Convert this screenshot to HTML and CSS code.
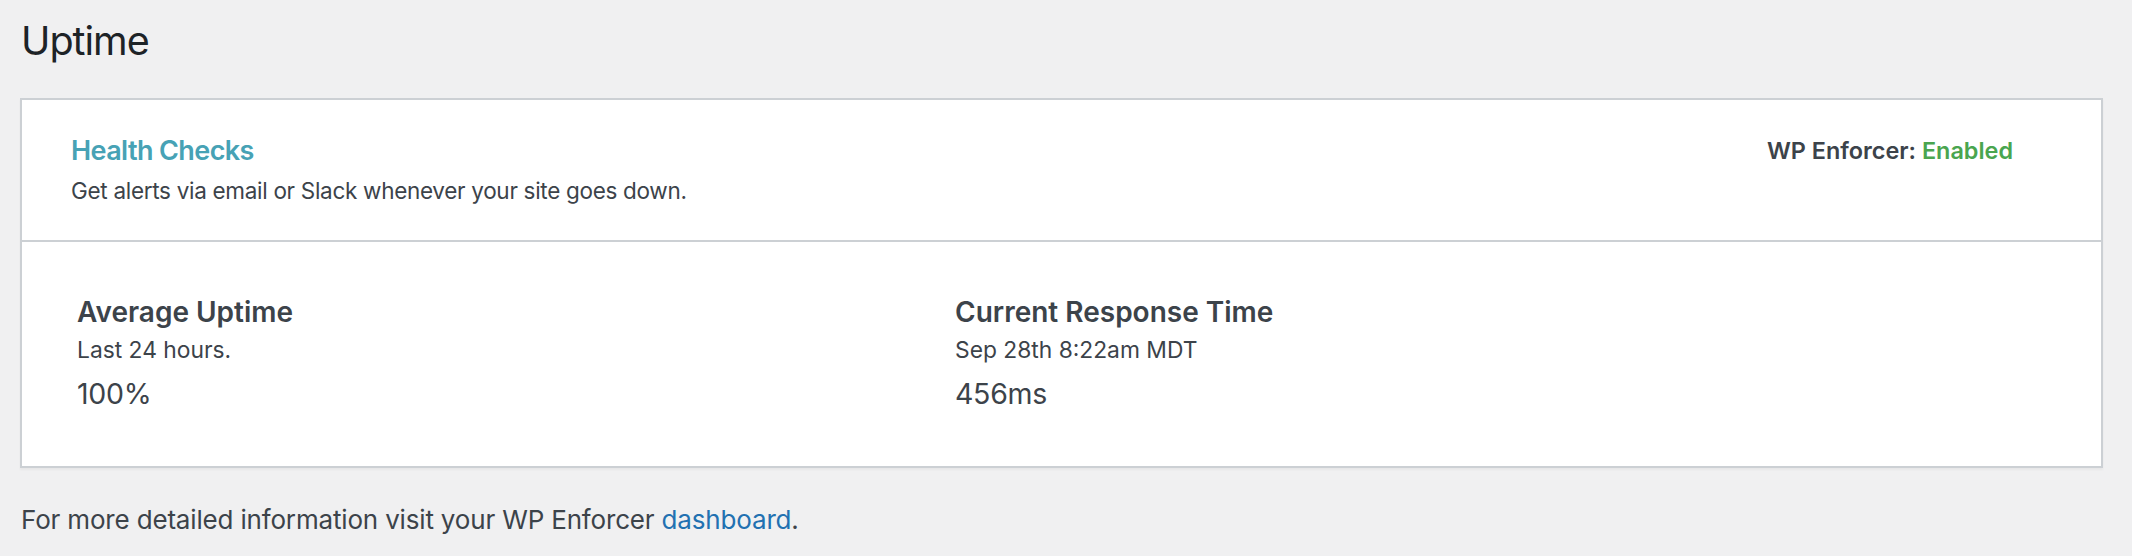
FILE: index.html
```html
<!DOCTYPE html>
<html lang="en">
<head>
<meta charset="utf-8">
<title>Uptime</title>
<link rel="stylesheet" href="styles.css">
</head>
<body>
<div class="wrap">
  <h1 class="page-title">Uptime</h1>
  <div class="card">
    <div class="card-header">
      <div class="card-intro">
        <h2 class="card-title">Health Checks</h2>
        <p class="card-desc">Get alerts via email or Slack whenever your site goes down.</p>
      </div>
      <div class="status">WP Enforcer: <span class="status-on">Enabled</span></div>
    </div>
    <div class="card-body">
      <div class="stat">
        <h3 class="stat-title">Average Uptime</h3>
        <p class="stat-sub">Last 24 hours.</p>
        <p class="stat-value">100%</p>
      </div>
      <div class="stat">
        <h3 class="stat-title">Current Response Time</h3>
        <p class="stat-sub">Sep 28th 8:22am MDT</p>
        <p class="stat-value">456ms</p>
      </div>
    </div>
  </div>
  <p class="footer-note">For more detailed information visit your WP Enforcer <a href="#" class="link">dashboard</a>.</p>
</div>
</body>
</html>
```
FILE: styles.css
```css
html, body {
  margin: 0;
  padding: 0;
  background: #f0f0f1;
}
body {
  font-family: Inter, "Noto Sans", sans-serif;
  color: #3c434a;
}
.wrap {
  padding: 0 29px 0 20px;
}
.page-title {
  margin: 0;
  padding: 15px 0 31px 1px;
  font-size: 39.5px;
  line-height: 52px;
  font-weight: 400;
  letter-spacing: -1px;
  color: #1d2327;
}
.card {
  background: #fff;
  border: 2px solid #ccd0d4;
  box-shadow: 0 2px 2px rgba(0,0,0,0.04);
}
.card-header {
  display: flex;
  justify-content: space-between;
  align-items: flex-start;
  padding: 33px 88px 33px 49px;
  border-bottom: 2px solid #ccd0d4;
}
.card-title {
  margin: 0;
  font-size: 27px;
  line-height: 36px;
  font-weight: 600;
  letter-spacing: -0.6px;
  color: #47a2b5;
}
.card-desc {
  margin: 6px 0 0;
  font-size: 22.5px;
  line-height: 32px;
  letter-spacing: -0.3px;
  color: #3c434a;
}
.status {
  font-size: 23.4px;
  line-height: 36px;
  font-weight: 600;
  color: #3c434a;
}
.status-on {
  color: #4aa54f;
}
.card-body {
  display: grid;
  grid-template-columns: 878px 1fr;
  padding: 52px 55px 54px 55px;
}
.stat-title {
  margin: 0;
  font-size: 28px;
  line-height: 36px;
  font-weight: 600;
  color: #3c434a;
}
.stat-sub {
  margin: 4px 0 0;
  font-size: 22.8px;
  line-height: 32px;
}
.stat-value {
  margin: 10px 0 0;
  font-size: 28.5px;
  line-height: 36px;
  letter-spacing: -0.3px;
}
.footer-note {
  margin: 34px 0 0 1px;
  font-size: 26px;
  line-height: 36px;
  letter-spacing: -0.17px;
  color: #3c434a;
}
.link {
  color: #2271b1;
  text-decoration: none;
}
```
